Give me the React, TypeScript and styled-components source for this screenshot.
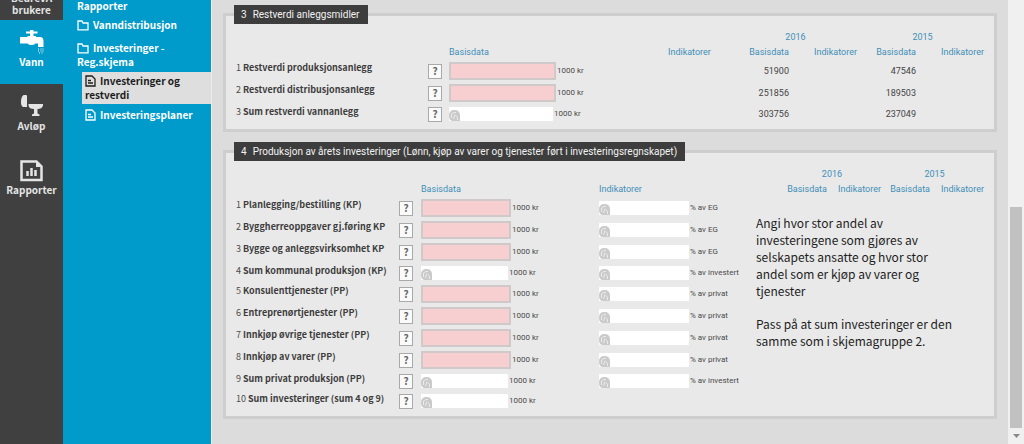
import React from 'react';
import styled, { createGlobalStyle, css } from 'styled-components';

const humanist = '"Noto Sans CJK JP", "Noto Sans", sans-serif';
const small = 'Roboto, "Noto Sans", sans-serif';

const GlobalStyle = createGlobalStyle`
  *, *::before, *::after { box-sizing: border-box; }
  body { margin: 0; background: #dcdcdc; font-family: ${humanist}; color: #3f3f3f; }
`;

const Page = styled.div`
  display: flex;
  min-height: 100vh;
`;

const MainNav = styled.nav`
  flex: 0 0 63px;
  background: #404040;
`;

const NavLink = styled.a<{ $active?: boolean; $cut?: boolean }>`
  display: flex;
  flex-direction: column;
  align-items: center;
  justify-content: flex-end;
  height: ${p => (p.$cut ? 20 : 64)}px;
  padding-bottom: ${p => (p.$cut ? 4 : 15)}px;
  overflow: hidden;
  text-align: center;
  text-decoration: none;
  font-size: 10px;
  font-weight: 700;
  line-height: ${p => (p.$cut ? 12 : 14)}px;
  color: ${p => (p.$active ? '#fff' : '#e4e4e4')};
  background: ${p => (p.$active ? '#009acb' : 'transparent')};
  svg { margin-bottom: 1px; }
`;

const SubNav = styled.nav`
  flex: 0 0 149px;
  min-width: 0;
  padding-left: 14px;
  background: #009acb;
  border-right: 1px solid #ececec;
  font-size: 10px;
  font-weight: 700;
  line-height: 14px;
`;

const SubLink = styled.a<{ $active?: boolean; $child?: boolean; $first?: boolean }>`
  display: block;
  padding: ${p => (p.$first ? '0 4px 2px 0' : '4px 4px 5px 0')};
  color: #fff;
  text-decoration: none;
  ${p => p.$first && 'line-height: 12px;'}
  svg { margin-right: 4px; vertical-align: -2px; }
  ${p => p.$child && css`
    margin-left: 5px;
    padding: 4px 16px 2px 3px;
  `}
  ${p => p.$active && css`
    margin-top: -2px;
    padding-top: 2px;
    background: #dedede;
    color: #1c1c1c;
  `}
`;

const Main = styled.main`
  flex: 1;
  min-width: 0;
  padding: 5px 11px 15px;
`;

const Panel = styled.fieldset`
  position: relative;
  min-width: 0;
  margin: 0 0 10px;
  padding: 6px 8px 5px 10px;
  border: 3px solid #cecece;
  background: #e9e9e9;
`;

const PanelTitle = styled.legend`
  margin-left: -2px;
  padding: 0 8px 0 7px;
  background: #3d3d3d;
  color: #f2f2f2;
  font: 400 10px/19px ${small};
  span { margin-right: 6px; }
`;

const Table = styled.table`
  width: 100%;
  table-layout: fixed;
  border-collapse: collapse;
  th, td { padding: 0; text-align: left; vertical-align: middle; white-space: nowrap; }
`;

const Col = styled.col<{ $w?: number }>`
  ${p => p.$w && `width: ${p.$w}px;`}
`;

const YearRow = styled.tr`
  height: 14px;
`;

const HeadRow = styled.tr`
  height: 16px;
`;

const Head = styled.th<{ $align?: 'center' | 'right'; $pad?: boolean }>`
  && {
    text-align: ${p => p.$align || 'left'};
    padding-right: ${p => (p.$pad ? 2 : 0)}px;
  }
  font: 400 9px/14px ${small};
  color: #3f8fb8;
`;

const Row = styled.tr<{ $sum?: boolean }>`
  height: ${p => (p.$sum ? 20 : 22)}px;
`;

const RowLabel = styled.th`
  && { padding-top: 1px; vertical-align: top; }
  font-size: 9px;
  font-weight: 400;
  line-height: 14px;
  color: #4c4c4c;
  label { font-weight: 700; color: #3d3d3d; margin-left: 2px; }
`;

const Help = styled.button`
  display: block;
  width: 14px;
  height: 15px;
  padding: 0;
  border: 1px solid #a9a9a9;
  background: #fafafa;
  color: #666;
  font: 700 10px/12px ${humanist};
`;

const Field = styled.div`
  display: flex;
  align-items: center;
  gap: 1px;
  font: 400 8px/12px ${small};
  color: #4a4a4a;
`;

const Entry = styled.input<{ $w: number }>`
  width: ${p => p.$w}px;
  height: 18px;
  padding: 0 3px;
  border: 2px solid #d0c9c9;
  border-radius: 0;
  background: #f8cfd0;
  font: 400 9px ${small};
`;

const Computed = styled.span<{ $w: number }>`
  display: flex;
  align-items: flex-end;
  width: ${p => p.$w}px;
  height: 14px;
  background: #fff;
  input { flex: 1; min-width: 0; height: 14px; padding: 0; border: 0; background: none; font: 400 9px ${small}; }
  svg { flex: none; }
`;

const Value = styled.td`
  && { text-align: right; }
  font: 400 9px/14px ${small};
  color: #444;
`;

const Note = styled.aside`
  position: absolute;
  top: 53px;
  right: 33px;
  width: 205px;
  font-size: 12px;
  line-height: 17px;
  color: #1d1d1d;
  p { margin: 0 0 16px; padding-right: 22px; }
  p + p { margin: 0; padding: 0; }
`;

const ScrollTrack = styled.div`
  flex: 0 0 16px;
  display: flex;
  flex-direction: column;
  align-items: center;
  justify-content: flex-end;
  background: #f0f0f0;
`;

const Thumb = styled.div`
  width: 12px;
  height: 221px;
  background: #c1c1c1;
`;

const ArrowButton = styled.button`
  display: flex;
  align-items: center;
  justify-content: center;
  width: 16px;
  height: 16px;
  padding: 0;
  border: 0;
  background: none;
`;

const TapIcon = () => (
  <svg width="24" height="24" viewBox="0 0 24 24" fill="currentColor" aria-hidden="true">
    <path d="M6 1.500h4V0h3.500v1.500h4V3.500h-4V6h2.500v1h4q3.500 0 3.500 4v6h-5.500v-3.500h-2.500q-1.500 1.500-4 1.500t-4-1.500H0V7h7.500V6H10V3.500H6z" />
    <path d="M18 18.500h1v1h-1zM20.500 18.500h1v1h-1zM22.500 18.500h1v1h-1zM18 20.500h1v1h-1zM20.500 20.500h1v1h-1zM22.500 20.500h1v1h-1zM19 22.500h1v1h-1zM21.500 22.500h1v1h-1z" />
  </svg>
);

const ToiletIcon = () => (
  <svg width="22" height="24" viewBox="0 0 22 24" fill="currentColor" aria-hidden="true">
    <path d="M2.500 1H5q1 0 1 1v11H2q-2-1-2-5.500T2.500 1z" />
    <path d="M7.500 10H22v1.500q-1 3.500-5.500 3.500v4.500l2 1V22h-7.500v-1.500l2-1V15q-5 0-5.500-3.500z" />
  </svg>
);

const ReportIcon = () => (
  <svg width="23" height="22" viewBox="0 0 23 22" fill="none" stroke="currentColor" aria-hidden="true">
    <path d="M1.500 1.500h15l5 5v13.500h-20z" strokeWidth="2.500" />
    <path d="M7.500 11v5M11.500 8v8M15.500 10v6" strokeWidth="2.500" />
    <path d="M16 1v6h6z" fill="currentColor" stroke="none" />
  </svg>
);

const FolderIcon = () => (
  <svg width="12" height="11" viewBox="0 0 12 11" fill="none" stroke="currentColor" strokeWidth="1.300" aria-hidden="true">
    <path d="M1 9.800V1h4l1 2h5v6.800z" />
  </svg>
);

const FormIcon = () => (
  <svg width="11" height="12" viewBox="0 0 11 12" fill="none" stroke="currentColor" strokeWidth="1.300" aria-hidden="true">
    <path d="M1 1h6l3 3v7H1z" />
    <path d="M3 5.500h3M3 8h5" />
  </svg>
);

const LockedIcon = () => (
  <svg width="11" height="11" viewBox="0 0 11 11" aria-hidden="true">
    <path d="M0 5.500Q0 0 5.500 0T11 5.500V11H3Q0 10 0 5.500z" fill="#cacaca" />
    <path d="M2.500 8V4Q4.500 2 7 2.500M4.500 9L6 4.500M7 5.500Q9 6.500 8.500 10" fill="none" stroke="#ececec" strokeWidth="1" />
  </svg>
);

type Item = { label: string; sum?: boolean; values?: [string, string]; indicator?: string };

const residual: Item[] = [
  { label: 'Restverdi produksjonsanlegg', values: ['51900', '47546'] },
  { label: 'Restverdi distribusjonsanlegg', values: ['251856', '189503'] },
  { label: 'Sum restverdi vannanlegg', sum: true, values: ['303756', '237049'] },
];

const production: Item[] = [
  { label: 'Planlegging/bestilling (KP)', indicator: '% av EG' },
  { label: 'Byggherreoppgaver gj.føring KP', indicator: '% av EG' },
  { label: 'Bygge og anleggsvirksomhet KP', indicator: '% av EG' },
  { label: 'Sum kommunal produksjon (KP)', sum: true, indicator: '% av investert' },
  { label: 'Konsulenttjenester (PP)', indicator: '% av privat' },
  { label: 'Entreprenørtjenester (PP)', indicator: '% av privat' },
  { label: 'Innkjøp øvrige tjenester (PP)', indicator: '% av privat' },
  { label: 'Innkjøp av varer (PP)', indicator: '% av privat' },
  { label: 'Sum privat produksjon (PP)', sum: true, indicator: '% av investert' },
  { label: 'Sum investeringer (sum 4 og 9)', sum: true },
];

type FormTableProps = { id: string; items: Item[]; cols: (number | undefined)[]; entry: number; computed: number };

function FormTable({ id, items, cols, entry, computed }: FormTableProps) {
  return (
    <Table>
      <colgroup>{cols.map((w, i) => <Col key={i} $w={w} />)}</colgroup>
      <thead>
        <YearRow>
          <td colSpan={4} />
          <Head colSpan={2} $align="center">2016</Head>
          <Head colSpan={2} $align="center">2015</Head>
        </YearRow>
        <HeadRow>
          <td colSpan={2} />
          <Head>Basisdata</Head>
          <Head>Indikatorer</Head>
          <Head $align="right">Basisdata</Head>
          <Head $align="right" $pad>Indikatorer</Head>
          <Head $align="right">Basisdata</Head>
          <Head $align="right" $pad>Indikatorer</Head>
        </HeadRow>
      </thead>
      <tbody>
        {items.map((item, i) => {
          const fieldId = `${id}-${i + 1}`;
          return (
            <Row key={fieldId} $sum={item.sum}>
              <RowLabel scope="row">
                {i + 1}
                <label htmlFor={fieldId}>{item.label}</label>
              </RowLabel>
              <td><Help type="button" aria-label={`Hjelp: ${item.label}`}>?</Help></td>
              <td>
                <Field>
                  {item.sum
                    ? <Computed $w={computed}><LockedIcon /><input id={fieldId} readOnly /></Computed>
                    : <Entry id={fieldId} $w={entry} />}
                  1000 kr
                </Field>
              </td>
              <td>
                {item.indicator && (
                  <Field>
                    <Computed $w={90}><LockedIcon /><input readOnly aria-label={`${item.label}, ${item.indicator}`} /></Computed>
                    {item.indicator}
                  </Field>
                )}
              </td>
              <Value>{item.values?.[0]}</Value>
              <td />
              <Value>{item.values?.[1]}</Value>
              <td />
            </Row>
          );
        })}
      </tbody>
    </Table>
  );
}

export default function App() {
  return (
    <>
      <GlobalStyle />
      <Page>
        <MainNav>
          <NavLink href="#brukere" $cut>BedreVA<br />brukere</NavLink>
          <NavLink href="#vann" $active><TapIcon />Vann</NavLink>
          <NavLink href="#avlop"><ToiletIcon />Avløp</NavLink>
          <NavLink href="#rapporter"><ReportIcon />Rapporter</NavLink>
        </MainNav>
        <SubNav>
          <SubLink href="#rapporter-vann" $first>Rapporter</SubLink>
          <SubLink href="#vanndistribusjon"><FolderIcon />Vanndistribusjon</SubLink>
          <SubLink href="#investeringer"><FolderIcon />Investeringer -<br />Reg.skjema</SubLink>
          <SubLink href="#restverdi" $child $active><FormIcon />Investeringer og restverdi</SubLink>
          <SubLink href="#planer" $child><FormIcon />Investeringsplaner</SubLink>
        </SubNav>
        <Main>
          <Panel>
            <PanelTitle><span>3</span>Restverdi anleggsmidler</PanelTitle>
            <FormTable id="restverdi" items={residual} cols={[192, 21, undefined, 64, 57, 70, 57, 70]} entry={107} computed={104} />
          </Panel>
          <Panel>
            <PanelTitle><span>4</span>Produksjon av årets investeringer (Lønn, kjøp av varer og tjenester ført i investeringsregnskapet)</PanelTitle>
            <FormTable id="produksjon" items={production} cols={[163, 22, undefined, 182, 46, 56, 47, 56]} entry={90} computed={87} />
            <Note>
              <p>Angi hvor stor andel av investeringene som gjøres av selskapets ansatte og hvor stor andel som er kjøp av varer og tjenester</p>
              <p>Pass på at sum investeringer er den samme som i skjemagruppe 2.</p>
            </Note>
          </Panel>
        </Main>
        <ScrollTrack>
          <Thumb />
          <ArrowButton type="button" aria-label="Rull ned">
            <svg width="7" height="4" viewBox="0 0 7 4" aria-hidden="true"><path d="M0 0h7L3.500 4z" fill="#8a8a8a" /></svg>
          </ArrowButton>
        </ScrollTrack>
      </Page>
    </>
  );
}
